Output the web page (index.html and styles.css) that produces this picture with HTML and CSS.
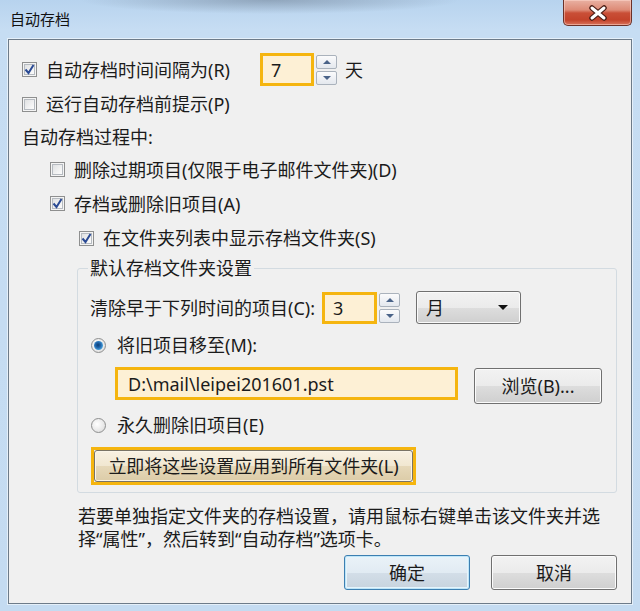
FILE: index.html
```html
<!DOCTYPE html>
<html lang="zh-CN">
<head>
<meta charset="utf-8">
<title>自动存档</title>
<link rel="stylesheet" href="styles.css">
</head>
<body>
<div class="window">
  <div class="titlebar">
    <span class="title">自动存档</span>
    <div class="close">
      <svg width="22" height="16" viewBox="0 0 22 16"><path d="M5 3 L17 13 M17 3 L5 13" stroke="#4a1c14" stroke-width="5.5" stroke-linecap="round" fill="none"/><path d="M5 3 L17 13 M17 3 L5 13" stroke="#ffffff" stroke-width="3" stroke-linecap="round" fill="none"/></svg>
    </div>
  </div>
  <div class="client">
    <div class="row r1">
      <span class="cb"><svg width="11" height="11" viewBox="0 0 11 11"><path d="M1.5 5.5 L4.5 9 L9.5 1" stroke="#2a4a94" stroke-width="2" fill="none"/></svg></span>
      <span class="lbl lbl-r">自动存档时间间隔为(R)</span>
      <span class="hl field f-days">7</span>
      <span class="spin"><span class="sbtn"><i class="tri-up"></i></span><span class="sbtn"><i class="tri-down"></i></span></span>
      <span class="unit">天</span>
    </div>
    <div class="row r2">
      <span class="cb"></span>
      <span class="lbl">运行自动存档前提示(P)</span>
    </div>
    <div class="row r3">
      <span class="lbl">自动存档过程中:</span>
    </div>
    <div class="row r4 l2">
      <span class="cb"></span>
      <span class="lbl">删除过期项目(仅限于电子邮件文件夹)(D)</span>
    </div>
    <div class="row r5 l2">
      <span class="cb"><svg width="11" height="11" viewBox="0 0 11 11"><path d="M1.5 5.5 L4.5 9 L9.5 1" stroke="#2a4a94" stroke-width="2" fill="none"/></svg></span>
      <span class="lbl">存档或删除旧项目(A)</span>
    </div>
    <div class="row r6 l3">
      <span class="cb"><svg width="11" height="11" viewBox="0 0 11 11"><path d="M1.5 5.5 L4.5 9 L9.5 1" stroke="#2a4a94" stroke-width="2" fill="none"/></svg></span>
      <span class="lbl">在文件夹列表中显示存档文件夹(S)</span>
    </div>
    <fieldset class="group">
      <legend>默认存档文件夹设置</legend>
      <div class="row g1">
        <span class="lbl lbl-c">清除早于下列时间的项目(C):</span>
        <span class="hl field f-num">3</span>
        <span class="spin"><span class="sbtn"><i class="tri-up"></i></span><span class="sbtn"><i class="tri-down"></i></span></span>
        <span class="combo"><span>月</span><i class="tri-combo"></i></span>
      </div>
      <div class="row g2">
        <span class="radio on"><i></i></span>
        <span class="lbl">将旧项目移至(M):</span>
      </div>
      <div class="row g3">
        <span class="hl field f-path">D:\mail\leipei201601.pst</span>
        <span class="btn btn-browse">浏览(B)...</span>
      </div>
      <div class="row g4">
        <span class="radio"></span>
        <span class="lbl">永久删除旧项目(E)</span>
      </div>
      <div class="hl apply-wrap">
        <span class="btn btn-apply">立即将这些设置应用到所有文件夹(L)</span>
      </div>
    </fieldset>
    <p class="note">若要单独指定文件夹的存档设置，请用鼠标右键单击该文件夹并选<br>择“属性”，然后转到“自动存档”选项卡。</p>
    <div class="actions">
      <span class="btn btn-ok">确定</span>
      <span class="btn btn-cancel">取消</span>
    </div>
  </div>
</div>
</body>
</html>
```
FILE: styles.css
```css
* { box-sizing: border-box; }
html, body { margin: 0; padding: 0; }
body {
  width: 640px;
  height: 611px;
  overflow: hidden;
  background: #c3daf0;
  font-family: "Noto Sans", "Noto Sans CJK SC", sans-serif;
  font-size: 18px;
  color: #1b1b1b;
}
.window {
  width: 640px;
  height: 611px;
  display: flex;
  flex-direction: column;
  background-image:
    radial-gradient(ellipse 190px 14px at 270px 0px, rgba(70, 80, 95, 0.35), rgba(70, 80, 95, 0) 100%),
    linear-gradient(180deg, #b7d3ee 0px, #c6ddf3 30px, #c4dbf1 100%);
}
.titlebar {
  height: 39px;
  display: flex;
  justify-content: space-between;
  align-items: flex-start;
  padding: 0 8px 0 10px;
}
.title {
  font-family: "Noto Sans CJK SC", sans-serif;
  font-size: 15px;
  line-height: 18px;
  margin-top: 10px;
  color: #111;
}
.close {
  width: 69px;
  height: 26px;
  border: 1px solid #6b3128;
  border-top: none;
  border-radius: 0 0 5px 5px;
  background: linear-gradient(180deg, #e9b1a3 0%, #dd8a76 40%, #c94f37 52%, #c3432b 80%, #d9745c 100%);
  box-shadow: inset 0 0 0 1px rgba(255, 220, 210, 0.5);
  display: flex;
  align-items: center;
  justify-content: center;
}
.client {
  margin: 0 8px;
  height: 565px;
  background: #f0f0f0;
  border: 1px solid #6d7b89;
  box-shadow: 0 0 0 1px rgba(255, 255, 255, 0.55);
  padding: 12px 14px 0 13px;
}
.row { display: flex; align-items: center; }
.lbl { line-height: 24px; white-space: nowrap; }
.r1 { height: 35px; }
.r2 { height: 34px; }
.r3 { height: 32px; }
.r4 { height: 33px; }
.r5 { height: 35px; }
.r6 { height: 34px; }
.l2 { padding-left: 28px; }
.l3 { padding-left: 57px; }

.cb {
  width: 15px;
  height: 15px;
  flex: none;
  margin-right: 9px;
  border: 1px solid #8e8f8f;
  background: linear-gradient(135deg, #d9dbdd 0%, #f7f7f7 70%, #ffffff 100%);
  box-shadow: inset 0 0 0 1px #f4f4f4, inset 0 0 0 2px #b6bbc1;
  display: flex;
  align-items: center;
  justify-content: center;
}
.cb svg { display: block; }

.lbl-r { width: 214px; }
.hl {
  border: 3px solid #f5b50f;
}
.field {
  background: #fdf0d5;
  line-height: 24px;
  padding-left: 8px;
  white-space: nowrap;
  display: flex;
  align-items: center;
}
.f-days { width: 54px; height: 33px; }
.spin {
  display: flex;
  flex-direction: column;
  gap: 2px;
  margin-left: 2px;
  flex: none;
}
.sbtn {
  width: 21px;
  height: 14px;
  border: 1px solid #aab2bc;
  border-radius: 2px;
  background: linear-gradient(180deg, #fbfbfc, #e4e8ee);
  display: flex;
  align-items: center;
  justify-content: center;
}
.tri-up, .tri-down { width: 0; height: 0; border-left: 4px solid transparent; border-right: 4px solid transparent; }
.tri-up { border-bottom: 4px solid #4a6388; }
.tri-down { border-top: 4px solid #4a6388; }
.unit { margin-left: 8px; line-height: 24px; }

.group {
  margin: 1px 0 0 55px;
  padding: 0 12px 7px 12px;
  border: 1px solid #d3dbe1;
  border-radius: 3px;
  min-width: 0;
}
.group legend {
  padding: 0 2px;
  margin-left: -2px;
  line-height: 24px;
  white-space: nowrap;
}
.g1 { height: 35px; margin-top: 10px; }
.lbl-c { width: 232px; }
.f-num { width: 55px; height: 32px; }
.combo {
  margin-left: 16px;
  width: 105px;
  height: 33px;
  border: 1px solid #707070;
  border-radius: 3px;
  background: linear-gradient(180deg, #f2f2f2 0%, #ebebeb 50%, #dddddd 51%, #cfcfcf 100%);
  box-shadow: inset 0 0 0 1px #fafafa;
  display: flex;
  align-items: center;
  justify-content: space-between;
  padding: 0 12px 0 9px;
  line-height: 24px;
}
.tri-combo { width: 0; height: 0; border-left: 5px solid transparent; border-right: 5px solid transparent; border-top: 5px solid #111; }
.g2 { height: 34px; margin-top: 3px; }
.radio {
  width: 15px;
  height: 15px;
  flex: none;
  margin: 0 11px 0 1px;
  border-radius: 50%;
  border: 1px solid #8e8f8f;
  background: radial-gradient(circle at 40% 40%, #ffffff 0%, #e8e8e8 60%, #d2d2d2 100%);
  display: flex;
  align-items: center;
  justify-content: center;
}
.radio.on i {
  width: 9px;
  height: 9px;
  border-radius: 50%;
  background: radial-gradient(circle at 45% 45%, #0d3f72 0%, #1f62a8 35%, #4aa6e0 75%, #9ad6f5 100%);
}
.g3 { height: 39px; margin-top: 4px; align-items: flex-start; padding-left: 25px; }
.f-path { width: 343px; height: 33px; margin-top: 1px; padding-left: 10px; }
.btn {
  display: flex;
  align-items: center;
  justify-content: center;
  border: 1px solid #707070;
  border-radius: 3px;
  background: linear-gradient(180deg, #f2f2f2 0%, #ebebeb 50%, #dddddd 51%, #cfcfcf 100%);
  box-shadow: inset 0 0 0 1px #fbfbfb;
  line-height: 24px;
  white-space: nowrap;
}
.btn-browse { width: 128px; height: 36px; margin: 2px 0 0 16px; }
.g4 { height: 30px; margin-top: 5px; }
.apply-wrap {
  margin: 7px 0 0 1px;
  width: 325px;
  height: 38px;
  display: flex;
}
.btn-apply {
  flex: 1;
  background: linear-gradient(180deg, #f8f1e2 0%, #f1e7d1 50%, #e6d8b9 51%, #dccca8 100%);
  border-color: #7a7466;
  box-shadow: inset 0 0 0 1px #fbf5e8;
}
.note {
  margin: 12px 0 0 56px;
  line-height: 23px;
  white-space: nowrap;
}
.actions {
  display: flex;
  justify-content: flex-end;
  gap: 21px;
  margin-top: 4px;
}
.btn-ok, .btn-cancel { width: 126px; height: 35px; }
.btn-ok {
  border-color: #3c7fb1;
  background: linear-gradient(180deg, #eaf2f8 0%, #e1ebf3 50%, #d3dee8 51%, #c7d3de 100%);
  box-shadow: inset 0 0 0 1px #bfe5f8, inset 0 0 0 2px #e6f4fb;
}
```
